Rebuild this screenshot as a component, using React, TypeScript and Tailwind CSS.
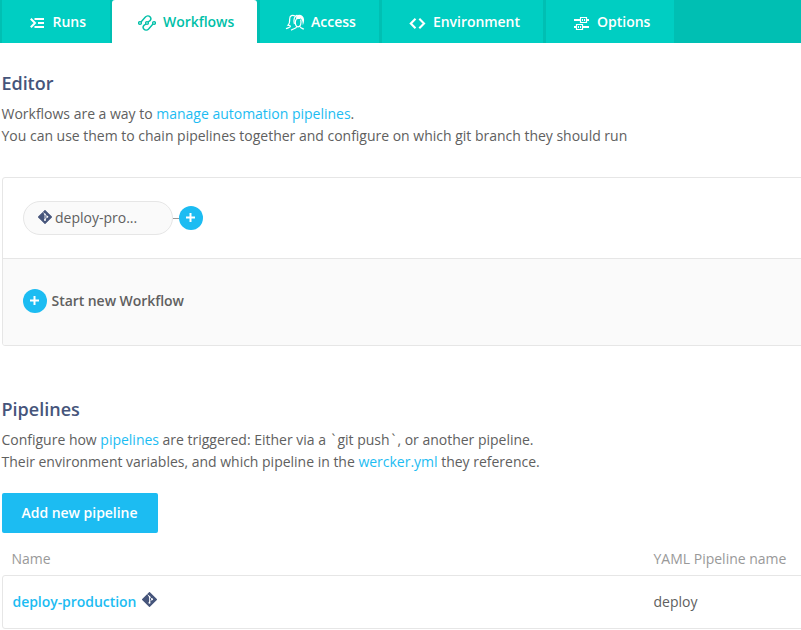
import React from "react";

const stroke = { fill: "none", stroke: "currentColor" } as const;

const RunsIcon = () => (
  <svg width="15" height="10" viewBox="0 0 15 10" {...stroke} strokeWidth="2">
    <path d="M.8 .7 5 5 .8 9.3M4.5 1H14M8 5H14M4.5 9H14" />
  </svg>
);
const FlowIcon = () => (
  <svg width="18" height="16" viewBox="0 0 18 16" {...stroke} strokeWidth="1.4">
    <circle cx="2" cy="8" r="1.4" />
    <circle cx="9" cy="8" r="1.4" />
    <circle cx="16" cy="8" r="1.4" />
    <path d="M3 7 7.4 2C8.7.6 10.800.500 12 1.700c1.200 1.200 1.200 2.700 0 4L10 7" />
    <path d="M8 9 6 10.300c-1.200 1.300-1.200 2.800 0 4 1.200 1.200 3.300 1.100 4.600-.3L15 9" />
  </svg>
);
const AccessIcon = () => (
  <svg width="20" height="17" viewBox="0 0 20 17" {...stroke} strokeWidth="1.2">
    <path d="M10 2.100C7.500.3 4.600 1.700 4.700 5c.1 3-.3 4.900-1.700 6.200 1.200.2 2.200.1 2.500.9.200 1.200-2.300 1.500-4.500 2.600" />
    <path d="M10.900 5.500c-1.400 3.500-.3 7.300 2.100 7.300s3.700-3.200 2.700-7.300" />
    <path d="M11.500 13c-.2 1.700-3.500 1.500-5.400 3.200M15.200 12.700c.3 1.500 2.200 1.500 3.600 2.600" />
    <path d="M9.400 10C8.300 6 9.200 2 12.300 1.200" />
    <path d="M11.500 1.600C14.500-.5 18.500 1 19 5c.2 2.500-.2 4.300-1.200 6.200-.1-3-.5-5-1.900-6.600-1.400.8-3.700.1-4.900 1.700-.1-1.500.2-3 .5-4.700Z" fill="currentColor" stroke="none" />
  </svg>
);
const CodeIcon = () => (
  <svg width="17" height="11" viewBox="0 0 17 11" {...stroke} strokeWidth="2.1">
    <path d="M6.5.8 1.8 5.5l4.7 4.7M10.3.8 15 5.500l-4.700 4.700" />
  </svg>
);
const OptionsIcon = () => (
  <svg width="16" height="13" viewBox="0 0 16 13" {...stroke}>
    <path d="M0 3H6M13 3H15M0 10H2M9 10H15" strokeWidth="2" />
    <path d="M6.5.5h6v5h-6zM2.5 7.5h6v5h-6z" strokeWidth="1.2" />
    <path d="M8.5 2v2M10.5 2v2M4.5 9v2M6.5 9v2" />
  </svg>
);
const GitIcon = ({ size }: { size: number }) => (
  <svg width={size} height={size} viewBox="0 0 16 16" className="shrink-0">
    <path d="M8 .7 15.3 8 8 15.3.7 8Z" fill="#46557b" stroke="#46557b" strokeWidth="1.4" strokeLinejoin="round" />
    <path d="M6 2.8 8 4.8v6.7M8 5l2.7 2.7M8 10.6l2.4-2.4" fill="none" stroke="#fff" strokeWidth=".9" />
    <circle cx="8" cy="11.5" r="1.1" fill="#fff" />
    <circle cx="10.7" cy="7.7" r="1.1" fill="#fff" />
    <circle cx="8" cy="4.9" r=".9" fill="#fff" />
  </svg>
);
const Plus = () => (
  <span className="flex h-6 w-6 shrink-0 items-center justify-center rounded-full bg-[#1cbcf2] pr-px pb-px text-white">
    <svg width="9" height="9" viewBox="0 0 9 9" {...stroke} strokeWidth="2">
      <path d="M4.5 0V9M0 4.5H9" />
    </svg>
  </span>
);

const tab = "flex h-[43px] shrink-0 items-start bg-[#00cec2] pt-[11px] text-white";

export default function App() {
  return (
    <div className="h-[630px] w-[801px] overflow-hidden bg-white font-['Open_Sans',sans-serif] text-sm leading-[22px] text-[#606060]">
      <nav className="flex h-[43px] bg-[#00bfb3] font-semibold">
        <div className={`${tab} ml-0.5 w-[108px] pl-7`}>
          <span className="w-[22.5px] pt-[7px]"><RunsIcon /></span>Runs
        </div>
        <div className="ml-0.5 flex w-[145px] shrink-0 items-start rounded-t-[3px] bg-white pt-[11px] pl-[26px] tracking-[-0.04px] text-[#00bfa8]">
          <span className="w-[25px] pt-1"><FlowIcon /></span>Workflows
        </div>
        <div className={`${tab} ml-[3px] w-[119px] pl-[25px]`}>
          <span className="w-[26px] pt-[3px]"><AccessIcon /></span>Access
        </div>
        <div className={`${tab} ml-[3px] w-[161px] pl-[27px] tracking-[-0.05px]`}>
          <span className="w-6 pt-[7px]"><CodeIcon /></span>Environment
        </div>
        <div className={`${tab} ml-[3px] w-[128px] pl-7`}>
          <span className="w-[23px] pt-1.5"><OptionsIcon /></span>Options
        </div>
      </nav>

      <main className="pl-0.5">
        <h2 className="mt-7 -ml-[0.5px] text-lg leading-6 font-semibold tracking-[-0.05px] text-[#46557b]">Editor</h2>
        <p className="mt-2 -ml-[0.5px] tracking-[-0.01px]">
          Workflows are a way to <a className="text-[#1cbcf2]">manage automation pipelines</a>.<br />
          You can use them to chain pipelines together and configure on which git branch they should run
        </p>

        <section className="mt-[30px] h-[169px] w-[820px] overflow-hidden rounded-[3px] border border-[#e6e6e6]">
          <div className="flex h-20 items-center pl-5">
            <div className="flex h-[34px] w-[150px] items-center rounded-full border border-[#e6e6e6] bg-[#fafafa] pl-3.5">
              <span className="mr-[3px] -mt-[3px]"><GitIcon size={14} /></span>deploy-pro...
            </div>
            <div className="h-px w-1.5 bg-[#999]" />
            <Plus />
          </div>
          <div className="flex h-[87px] items-center gap-[4.5px] border-t border-[#e6e6e6] bg-[#fafafa] pb-[2px] pl-5 font-semibold tracking-[-0.05px]">
            <Plus />Start new Workflow
          </div>
        </section>

        <h2 className="mt-[51px] -ml-[0.5px] text-lg leading-6 font-semibold text-[#46557b]">Pipelines</h2>
        <p className="mt-2 -ml-[0.5px] tracking-[-0.01px]">
          Configure how <a className="text-[#1cbcf2]">pipelines</a> are triggered: Either via a <span className="px-0.5">`</span>git push<span className="px-0.5">`</span>, or another pipeline.<br />
          Their environment variables, and which pipeline in the <a className="text-[#1cbcf2]">wercker.yml</a> they reference.
        </p>
        <button className="mt-5 flex h-10 w-[156px] items-center justify-center rounded-[2px] bg-[#1cbcf2] pr-px font-semibold tracking-[-0.03px] text-white">
          Add new pipeline
        </button>
        <div className="mt-[15px] flex pl-[9.5px] text-[#999]">
          <span className="w-[642px]">Name</span><span>YAML Pipeline name</span>
        </div>
        <div className="mt-[5px] flex h-[54px] w-[820px] items-center rounded-[3px] border border-[#e6e6e6] pl-[9.5px]">
          <div className="flex w-[641px] items-center font-semibold tracking-[-0.05px] text-[#1cbcf2]">
            deploy-production<span className="ml-1.5 -mt-1.5"><GitIcon size={15} /></span>
          </div>
          <span>deploy</span>
        </div>
      </main>
    </div>
  );
}
